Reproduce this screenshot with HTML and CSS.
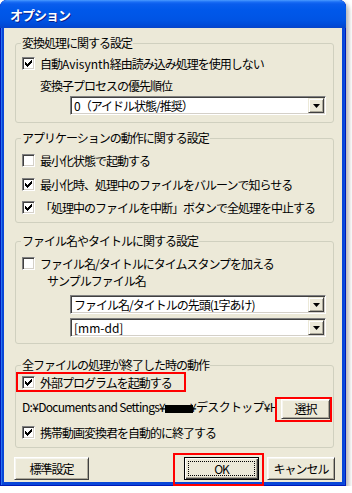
FILE: index.html
```html
<!DOCTYPE html>
<html lang="ja">
<head>
    <meta charset="UTF-8">
    <title>オプション</title>
    <link rel="stylesheet" href="styles.css">
</head>
<body>
    <div class="window">
        <div class="titlebar"><span class="title">オプション</span></div>

        <div class="client">
            <div class="group g1">
                <div class="legend">変換処理に関する設定</div>
                <div class="check-row m5">
                    <span class="box"><svg width="7" height="7" viewBox="0 0 7 7"><path d="M0 2h1v3h-1zM1 3h1v3h-1zM2 4h1v3h-1zM3 3h1v3h-1zM4 2h1v3h-1zM5 1h1v3h-1zM6 0h1v3h-1z"/></svg></span>
                    <span>自動<span class="latin">Avisynth</span>経由読み込み処理を使用しない</span>
                </div>
                <div class="text-row m7 indent">変換子プロセスの優先順位</div>
                <div class="combo m2">
                    <span class="combo-text">0（アイドル状態/推奨）</span>
                    <span class="combo-btn"><svg width="7" height="4" viewBox="0 0 7 4"><path d="M0 0h7l-3.5 4z"/></svg></span>
                </div>
            </div>

            <div class="group g2">
                <div class="legend">アプリケーションの動作に関する設定</div>
                <div class="check-row m7">
                    <span class="box"></span>
                    <span>最小化状態で起動する</span>
                </div>
                <div class="check-row m8">
                    <span class="box"><svg width="7" height="7" viewBox="0 0 7 7"><path d="M0 2h1v3h-1zM1 3h1v3h-1zM2 4h1v3h-1zM3 3h1v3h-1zM4 2h1v3h-1zM5 1h1v3h-1zM6 0h1v3h-1z"/></svg></span>
                    <span>最小化時、処理中のファイルをバルーンで知らせる</span>
                </div>
                <div class="check-row m7">
                    <span class="box"><svg width="7" height="7" viewBox="0 0 7 7"><path d="M0 2h1v3h-1zM1 3h1v3h-1zM2 4h1v3h-1zM3 3h1v3h-1zM4 2h1v3h-1zM5 1h1v3h-1zM6 0h1v3h-1z"/></svg></span>
                    <span>「処理中のファイルを中断」ボタンで全処理を中止する</span>
                </div>
            </div>

            <div class="group g3">
                <div class="legend">ファイル名やタイトルに関する設定</div>
                <div class="check-row m7">
                    <span class="box"></span>
                    <span>ファイル名/タイトルにタイムスタンプを加える</span>
                </div>
                <div class="text-row m2 indent-sample">サンプルファイル名</div>
                <div class="combo m6">
                    <span class="combo-text">ファイル名/タイトルの先頭(1字あけ)</span>
                    <span class="combo-btn"><svg width="7" height="4" viewBox="0 0 7 4"><path d="M0 0h7l-3.5 4z"/></svg></span>
                </div>
                <div class="combo m4">
                    <span class="combo-text latin">[mm-dd]</span>
                    <span class="combo-btn"><svg width="7" height="4" viewBox="0 0 7 4"><path d="M0 0h7l-3.5 4z"/></svg></span>
                </div>
            </div>

            <div class="group g4">
                <div class="legend">全ファイルの処理が終了した時の動作</div>
                <div class="mark mark-check">
                    <div class="check-row">
                        <span class="box"><svg width="7" height="7" viewBox="0 0 7 7"><path d="M0 2h1v3h-1zM1 3h1v3h-1zM2 4h1v3h-1zM3 3h1v3h-1zM4 2h1v3h-1zM5 1h1v3h-1zM6 0h1v3h-1z"/></svg></span>
                        <span>外部プログラムを起動する</span>
                    </div>
                </div>
                <div class="path-row">
                    <div class="path-text">D:¥Documents and Settings¥<span class="redact"></span>¥デスクトップ¥H</div>
                    <div class="mark mark-select">
                        <button class="btn btn-select">選択</button>
                    </div>
                </div>
                <div class="check-row m2">
                    <span class="box"><svg width="7" height="7" viewBox="0 0 7 7"><path d="M0 2h1v3h-1zM1 3h1v3h-1zM2 4h1v3h-1zM3 3h1v3h-1zM4 2h1v3h-1zM5 1h1v3h-1zM6 0h1v3h-1z"/></svg></span>
                    <span>携帯動画変換君を自動的に終了する</span>
                </div>
            </div>

            <div class="button-row">
                <button class="btn btn-default-set">標準設定</button>
                <div class="mark mark-ok">
                    <button class="btn btn-ok"><span class="focus">OK</span></button>
                </div>
                <button class="btn btn-cancel">キャンセル</button>
            </div>
        </div>
    </div>
</body>
</html>
```

FILE: styles.css
```css
/* page */
html,
body {
    margin: 0;
    padding: 0;
}

body {
    background: #ffffff;
    font: 12px "Noto Sans CJK JP", "Noto Sans", sans-serif;
    letter-spacing: -1px;
    color: #000000;
}

button {
    margin: 0;
    padding: 0;
    font: inherit;
    letter-spacing: inherit;
    color: inherit;
    -webkit-appearance: none;
    appearance: none;
}

.latin {
    letter-spacing: 0;
}

/* window frame */
.window {
    width: 346px;
    height: 486px;
    display: flex;
    flex-direction: column;
    background: #0846d8;
    border-radius: 7px 7px 0 0;
    box-shadow: inset 1px 0 #0019b8, inset -1px 0 #0019b8, inset 0 -1px #0019b8,
        inset 2px 0 #2a72f0, inset -2px 0 #0a50e0, 3px 3px 4px rgba(0, 0, 0, 0.28);
}

.titlebar {
    height: 29px;
    display: flex;
    align-items: center;
    padding-left: 10px;
    border-radius: 7px 7px 0 0;
    background: linear-gradient(#4b9bff 0, #1a6ef5 2px, #0a5ded 4px, #0058ea 10px, #0054e4 20px, #004bd8 25px, #0a42c4 29px);
}

.title {
    color: #ffffff;
    font-weight: bold;
    font-size: 13px;
    text-shadow: 1px 1px #0a1f8a;
    padding-top: 1px;
}

.client {
    flex: 1;
    margin: 0 4px 4px;
    padding-top: 15px;
    background: #ece9d8;
}

/* group boxes */
.group {
    margin-left: 11px;
    width: 317px;
    border: 1px solid #d0d0bf;
    border-radius: 3px;
}

.g1 {
    padding-bottom: 7px;
}

.g2 {
    margin-top: 15px;
    padding-bottom: 7px;
}

.g3 {
    margin-top: 18px;
    padding-bottom: 6px;
}

.g4 {
    margin-top: 21px;
    padding-bottom: 7px;
}

.legend {
    display: table;
    margin: -8px 0 0 5px;
    padding: 0 1px;
    line-height: 14px;
    background: #ece9d8;
    color: #000000;
}

.m2 { margin-top: 2px; }
.m4 { margin-top: 4px; }
.m5 { margin-top: 5px; }
.m6 { margin-top: 6px; }
.m7 { margin-top: 7px; }
.m8 { margin-top: 8px; }

/* rows */
.check-row {
    height: 16px;
    display: flex;
    align-items: center;
    padding-left: 6px;
    white-space: nowrap;
}

.box {
    width: 9px;
    height: 9px;
    flex: none;
    margin-right: 5px;
    padding: 1px;
    box-sizing: content-box;
    display: flex;
    align-items: center;
    justify-content: center;
    background: #ffffff;
    border: 1px solid;
    border-color: #808080 #ffffff #ffffff #808080;
    box-shadow: inset 1px 1px #404040, inset -1px -1px #d4d0c8;
}

.box svg {
    display: block;
    fill: #000000;
    shape-rendering: crispEdges;
}

.text-row {
    height: 16px;
    line-height: 16px;
    white-space: nowrap;
}

.indent {
    padding-left: 24px;
}

.indent-sample {
    padding-left: 31px;
}

/* combo boxes */
.combo {
    width: 256px;
    height: 19px;
    margin-left: 54px;
    box-sizing: border-box;
    display: flex;
    align-items: center;
    background: #ffffff;
    border: 1px solid;
    border-color: #808080 #ffffff #ffffff #808080;
    box-shadow: inset 1px 1px #404040, inset -1px -1px #d4d0c8;
    padding: 1px 1px 1px 3px;
}

.combo-text {
    flex: 1;
    line-height: 15px;
    white-space: nowrap;
    overflow: hidden;
}

.combo-btn {
    width: 16px;
    height: 15px;
    flex: none;
    box-sizing: border-box;
    display: flex;
    align-items: center;
    justify-content: center;
    background: #ece9d8;
    border: 1px solid;
    border-color: #ece9d8 #404040 #404040 #ece9d8;
    box-shadow: inset 1px 1px #ffffff, inset -1px -1px #aca899;
}

.combo-btn svg {
    display: block;
    fill: #000000;
}

/* red annotation frames */
.mark {
    border: 2px solid #ff0000;
    box-sizing: border-box;
}

.mark-check {
    width: 170px;
    height: 20px;
    padding: 0;
}

.mark-check .check-row {
    padding-left: 4px;
}

.path-row {
    display: flex;
    margin-top: 5px;
}

.path-text {
    flex: 1;
    min-width: 0;
    margin: 2px 0 0 6px;
    line-height: 16px;
    letter-spacing: -0.7px;
    white-space: nowrap;
    overflow: hidden;
}

.redact {
    display: inline-block;
    width: 28px;
    height: 8px;
    background: #000000;
    vertical-align: -1px;
    margin-right: -3px;
}

.mark-select {
    flex: none;
    margin-right: 1px;
    padding: 0 0 1px 4px;
}

/* push buttons */
.btn {
    display: flex;
    align-items: center;
    justify-content: center;
    box-sizing: border-box;
    background: #ece9d8;
    border: 1px solid;
    border-color: #ffffff #404040 #404040 #ffffff;
    box-shadow: inset 1px 1px #f6f5ef, inset -1px -1px #aca899;
    height: 23px;
    line-height: 16px;
}

.btn-select {
    width: 49px;
    height: 20px;
}

.button-row {
    display: flex;
    align-items: flex-start;
    margin-top: 9px;
    padding-left: 10px;
}

.btn-default-set {
    width: 75px;
}

.mark-ok {
    margin: -4px 0 -4px 84px;
    padding: 2px 3px 4px 9px;
    position: relative;
}

.btn-ok {
    width: 75px;
    border-color: #000000;
    box-shadow: inset 1px 1px #ffffff, inset -1px -1px #404040, inset -2px -2px #aca899;
    padding: 3px;
}

.focus {
    flex: 1;
    align-self: stretch;
    display: flex;
    align-items: center;
    justify-content: center;
    outline: 1px dotted #000000;
    outline-offset: -1px;
}

.btn-cancel {
    width: 68px;
    margin-left: 3px;
}
```
